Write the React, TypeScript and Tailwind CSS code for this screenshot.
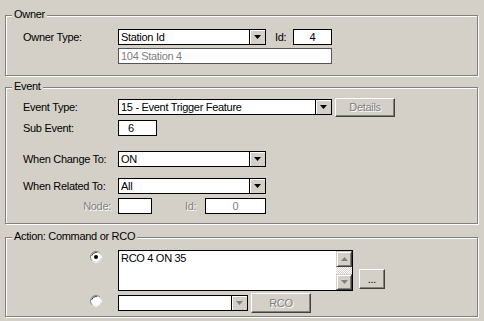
import React from "react";

const DownArrow = ({ color = "#000" }: { color?: string }) => (
  <svg width="7" height="4" viewBox="0 0 7 4" className="block">
    <polygon points="0,0 7,0 3.5,4" fill={color} />
  </svg>
);

const UpArrow = ({ color = "#000" }: { color?: string }) => (
  <svg width="7" height="4" viewBox="0 0 7 4" className="block">
    <polygon points="0,4 7,4 3.5,0" fill={color} />
  </svg>
);

const Radio = ({ checked }: { checked?: boolean }) => (
  <svg width="12" height="12" viewBox="0 0 12 12" className="block">
    <circle cx="6" cy="6" r="5.5" fill="#fff" stroke="#808080" />
    <path d="M 9.9 2.1 A 5.5 5.5 0 0 1 2.1 9.9" fill="none" stroke="#fff" />
    <circle cx="6" cy="6" r="4.5" fill="none" stroke="#404040" strokeDasharray="7 30" strokeDashoffset="-15" />
    {checked && <circle cx="6" cy="6" r="2" fill="#000" />}
  </svg>
);

const Group = ({
  label,
  className,
  children,
}: {
  label: string;
  className: string;
  children: React.ReactNode;
}) => (
  <div
    className={
      "relative w-[473px] border border-[#808080] shadow-[inset_1px_1px_0_#fff,1px_1px_0_#fff] " +
      className
    }
  >
    <span className="absolute -top-[8px] left-[6px] px-[2px] bg-[#d4d0c8] leading-[13px]">
      {label}
    </span>
    {children}
  </div>
);

const Combo = ({
  value,
  width,
  disabled,
}: {
  value: string;
  width: string;
  disabled?: boolean;
}) => (
  <div className={"flex h-[16px] border border-black bg-white " + width}>
    <div className="flex-1 pl-[2px] leading-[14px] overflow-hidden whitespace-nowrap">
      {value}
    </div>
    <div className="w-[16px] h-[14px] flex items-center justify-center border-l border-black bg-[#d4d0c8] shadow-[inset_1px_1px_0_#fff]">
      <DownArrow color={disabled ? "#808080" : "#000"} />
    </div>
  </div>
);

const Button = ({
  children,
  className,
  disabled,
}: {
  children: React.ReactNode;
  className: string;
  disabled?: boolean;
}) => (
  <div
    className={
      "flex items-center justify-center bg-[#d4d0c8] border border-t-white border-l-white border-r-[#404040] border-b-[#404040] shadow-[inset_-1px_-1px_0_#808080] " +
      (disabled ? "text-[#808080] [text-shadow:1px_1px_0_#fff] " : "text-black ") +
      className
    }
  >
    {children}
  </div>
);

export default function App() {
  return (
    <div className="w-[484px] h-[321px] overflow-hidden bg-[#d4d0c8] pt-[15px] pl-[5px] font-['Liberation_Sans',Arial,sans-serif] text-[11px] tracking-[-0.3px] leading-[13px] text-black">
      {/* Owner */}
      <Group label="Owner" className="h-[61px] pt-[13px] pl-[17px]">
        <div className="flex items-center h-[16px]">
          <div className="w-[95px]">Owner Type:</div>
          <Combo value="Station Id" width="w-[148px]" />
          <div className="ml-[9px] w-[18px]">Id:</div>
          <div className="w-[39px] h-[16px] border border-black bg-white text-center leading-[14px]">
            4
          </div>
        </div>
        <div className="flex items-center h-[16px] mt-[3px]">
          <div className="ml-[95px] w-[214px] h-[16px] border border-[#555] bg-white pl-[2px] leading-[14px] text-[#808080]">
            104 Station 4
          </div>
        </div>
      </Group>

      {/* Event */}
      <Group label="Event" className="mt-[11px] h-[137px] pt-[11px] pl-[17px]">
        <div className="flex items-start h-[16px]">
          <div className="w-[95px] leading-[16px]">Event Type:</div>
          <Combo value="15 - Event Trigger Feature" width="w-[214px]" />
          <Button disabled className="ml-[3px] -mt-[1px] w-[60px] h-[19px] shrink-0">
            Details
          </Button>
        </div>
        <div className="flex items-center h-[16px] mt-[5px]">
          <div className="w-[95px]">Sub Event:</div>
          <div className="w-[39px] h-[16px] border border-black bg-white pl-[9px] leading-[14px]">
            6
          </div>
        </div>
        <div className="flex items-center h-[16px] mt-[15px]">
          <div className="w-[95px]">When Change To:</div>
          <Combo value="ON" width="w-[148px]" />
        </div>
        <div className="flex items-center h-[16px] mt-[11px]">
          <div className="w-[95px]">When Related To:</div>
          <Combo value="All" width="w-[148px]" />
        </div>
        <div className="flex items-center h-[16px] mt-[4px]">
          <div className="w-[95px] text-right pr-[7px] text-[#808080] [text-shadow:1px_1px_0_#fff]">
            Node:
          </div>
          <div className="w-[34px] h-[16px] border border-black bg-white" />
          <div className="ml-[33px] w-[20px] text-[#808080] [text-shadow:1px_1px_0_#fff]">
            Id:
          </div>
          <div className="w-[61px] h-[16px] border border-black bg-white text-center leading-[14px] text-[#808080]">
            0
          </div>
        </div>
      </Group>

      {/* Action */}
      <Group label="Action: Command or RCO" className="mt-[13px] h-[80px] pt-[12px] pl-[17px]">
        <div className="flex items-start">
          <div className="ml-[67px] mt-[1px]">
            <Radio checked />
          </div>
          <div className="ml-[16px] w-[235px] h-[41px] border border-black bg-white flex">
            <div className="flex-1 pl-[2px] pt-[1px] leading-[13px]">RCO 4 ON 35</div>
            <div className="w-[16px] flex flex-col">
              <div className="h-[16px] flex items-center justify-center bg-[#d4d0c8] border border-t-[#d4d0c8] border-l-[#d4d0c8] border-r-[#404040] border-b-[#404040] shadow-[inset_1px_1px_0_#fff,inset_-1px_-1px_0_#808080]">
                <UpArrow color="#808080" />
              </div>
              <div className="flex-1 bg-[repeating-conic-gradient(#fff_0_25%,#d4d0c8_0_50%)] bg-[length:2px_2px]" />
              <div className="h-[16px] flex items-center justify-center bg-[#d4d0c8] border border-t-[#d4d0c8] border-l-[#d4d0c8] border-r-[#404040] border-b-[#404040] shadow-[inset_1px_1px_0_#fff,inset_-1px_-1px_0_#808080]">
                <DownArrow color="#808080" />
              </div>
            </div>
          </div>
          <Button className="ml-[6px] mt-[19px] w-[26px] h-[20px]">...</Button>
        </div>
        <div className="flex items-start mt-[4px]">
          <div className="ml-[67px]">
            <Radio />
          </div>
          <div className="ml-[16px]">
            <Combo value="" width="w-[130px]" disabled />
          </div>
          <Button disabled className="ml-[3px] -mt-[2px] w-[60px] h-[20px]">
            RCO
          </Button>
        </div>
      </Group>
    </div>
  );
}
